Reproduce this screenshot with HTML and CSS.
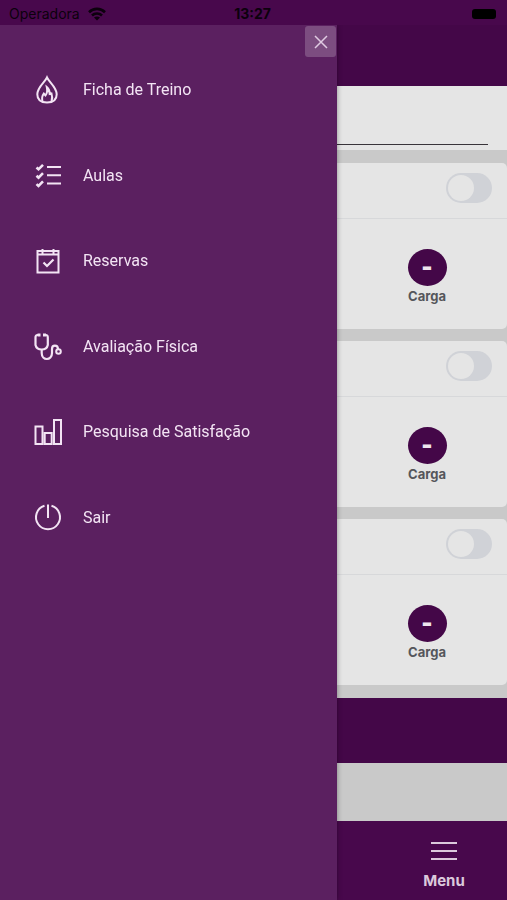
FILE: index.html
```html
<!DOCTYPE html>
<html lang="pt-BR">
<head>
<meta charset="utf-8">
<meta name="viewport" content="width=device-width, initial-scale=1">
<title>Menu</title>
<link rel="stylesheet" href="styles.css">
</head>
<body>
<div class="app">
  <div class="status">
    <span class="carrier">Operadora
      <svg class="wifi" viewBox="0 0 18 14" width="18" height="14" aria-hidden="true"><g fill="none" stroke="currentColor" stroke-width="2.6"><path d="M1 5.2C5.5.8 12.5.8 17 5.2"/><path d="M4 8.5C6.8 5.8 11.2 5.8 14 8.5"/></g><path d="M9 13.5L6 10.6C7.8 9.2 10.2 9.2 12 10.6z" fill="currentColor"/></svg>
    </span>
    <span class="clock">13:27</span>
    <span class="battery"></span>
  </div>
  <header class="header"></header>
  <div class="search"><div class="line"></div></div>
  <main class="cards">
    <section class="card">
      <div class="card-head"><input class="switch" type="checkbox" aria-label="Concluir"></div>
      <div class="card-body"><div class="load"><button class="load-button" type="button">-</button><span class="load-name">Carga</span></div></div>
    </section>
    <section class="card">
      <div class="card-head"><input class="switch" type="checkbox" aria-label="Concluir"></div>
      <div class="card-body"><div class="load"><button class="load-button" type="button">-</button><span class="load-name">Carga</span></div></div>
    </section>
    <section class="card">
      <div class="card-head"><input class="switch" type="checkbox" aria-label="Concluir"></div>
      <div class="card-body"><div class="load"><button class="load-button" type="button">-</button><span class="load-name">Carga</span></div></div>
    </section>
  </main>
  <div class="band"></div>
  <div class="spacer"></div>
  <footer class="tabs">
    <button class="tab" type="button">
      <svg viewBox="0 0 26 20" width="26" height="20" aria-hidden="true"><path d="M0 2h26M0 10h26M0 18h26" stroke="currentColor" stroke-width="2"/></svg>
      Menu
    </button>
  </footer>
</div>

<aside class="drawer">
  <button class="close" type="button" aria-label="Fechar"><svg viewBox="0 0 14 14" width="14" height="14" aria-hidden="true"><path d="M1 1l12 12M13 1L1 13" stroke="currentColor" stroke-width="1.5"/></svg></button>
  <nav class="menu">
    <a class="item" href="#">
      <svg class="icon" viewBox="0 0 30 30" aria-hidden="true"><path d="M14 2.5C12 7 4.3 12 4.3 19.3C4.3 25 8.500 27.500 14 27.500S23.700 25 23.700 19.300C23.700 12 16 7 14 2.500z"/><path d="M9.500 26.500C8.500 23 9 21 10.800 18.500L12.500 20.500C14.500 18 14.500 15.500 13.800 12C16.300 14 16.700 16 16.700 19L18.500 18.500C19.500 21.500 19.500 23.500 18.500 26.500"/></svg>
      <span>Ficha de Treino</span>
    </a>
    <a class="item" href="#">
      <svg class="icon" viewBox="0 0 30 30" aria-hidden="true"><path d="M14 7h14M14 15.300h14M14 23.600h14"/><path stroke-width="2.600" d="M3.500 7.500l2 1.800L10 4.800M3.500 15.800l2 1.800L10 13.100M3.500 24.100l2 1.800L10 21.400"/></svg>
      <span>Aulas</span>
    </a>
    <a class="item" href="#">
      <svg class="icon" viewBox="0 0 30 30" aria-hidden="true"><path d="M4.500 5h21v21.500h-21zM4.500 8.500h21M9.500 3v5M20.500 3v5"/><path stroke-width="2.200" d="M10.500 16.500l3.500 3.500 6.500-6.500"/></svg>
      <span>Reservas</span>
    </a>
    <a class="item" href="#">
      <svg class="icon" viewBox="0 0 30 30" aria-hidden="true"><path stroke-width="2.200" d="M6.500 4H4.500Q2.500 4 2.500 6.500V14Q3.500 18.500 8.700 18.500T14.800 14V6.500Q14.800 4 12.800 4H11"/><path stroke-width="2.200" d="M8.700 19V22C8.700 30 19 30 19 22V18C19 13.500 24.800 13.500 25 18"/><circle cx="25.500" cy="20.500" r="2.300"/><path stroke-width="3" d="M6 2.500v3M11.500 2.500v3"/></svg>
      <span>Avaliação Física</span>
    </a>
    <a class="item" href="#">
      <svg class="icon" viewBox="0 0 30 30" aria-hidden="true"><path d="M2.500 9.500h7v17.500h-7zM11.700 16h7v11h-7zM21 3h7v24h-7z"/></svg>
      <span>Pesquisa de Satisfação</span>
    </a>
    <a class="item" href="#">
      <svg class="icon" viewBox="0 0 30 30" aria-hidden="true"><path d="M11.500 3.800A12 12 0 1 0 18.500 3.800M15 2.500v13.500"/></svg>
      <span>Sair</span>
    </a>
  </nav>
</aside>
</body>
</html>
```
FILE: styles.css
```css
* { box-sizing: border-box; }

body {
  margin: 0;
  font-family: Inter, Roboto, sans-serif;
  background: #c9c9c9;
}

button { border: 0; padding: 0; font-family: inherit; }

.app {
  display: flex;
  flex-direction: column;
  min-height: 100vh;
}

.status {
  display: grid;
  grid-template-columns: 1fr auto 1fr;
  align-items: center;
  height: 25px;
  padding: 2px 11px 0 9px;
  background: #48084c;
  color: #0c010d;
  font-size: 14px;
}
.carrier {
  display: flex;
  align-items: center;
  gap: 8px;
}
.clock { font-weight: 700; }
.battery {
  justify-self: end;
  width: 24px;
  height: 10px;
  border-radius: 3px;
  background: #000;
}

.header { height: 61px; background: #440748; }

.search {
  height: 64px;
  padding: 58px 19px 0 0;
  background: #e5e5e5;
}
.line { height: 1px; background: #38343a; }

.cards {
  display: grid;
  gap: 12px;
  padding: 13px 0;
}
.card { border-radius: 5px; background: #e5e5e5; }
.card-head {
  display: flex;
  justify-content: flex-end;
  align-items: center;
  height: 56px;
  padding: 0 15px 6px 0;
  border-bottom: 1px solid #d7d8da;
}
.switch {
  appearance: none;
  width: 46px;
  height: 30px;
  margin: 0;
  padding: 2px;
  border-radius: 15px;
  background: #d0d2d7;
}
.switch::before {
  content: "";
  display: block;
  width: 26px;
  height: 26px;
  border-radius: 50%;
  background: #e5e5e5;
}
.card-body {
  display: flex;
  justify-content: flex-end;
  height: 110px;
  padding-top: 30px;
}
.load {
  display: flex;
  flex-direction: column;
  align-items: center;
  gap: 2px;
  width: 160px;
}
.load-button {
  width: 39px;
  height: 37px;
  border-radius: 50%;
  background: #440748;
  color: #eee5ee;
  font-family: Roboto, sans-serif;
  font-size: 28px;
  font-weight: 900;
  line-height: 36px;
}
.load-name {
  color: #55565b;
  font-size: 13px;
  font-weight: 700;
  line-height: 16px;
}

.band { height: 65px; background: #440748; }
.spacer { flex: 1; min-height: 57px; }

.tabs {
  display: flex;
  justify-content: flex-end;
  height: 79px;
  background: #48084c;
}
.tab {
  display: flex;
  flex-direction: column;
  align-items: center;
  gap: 10px;
  width: 126px;
  padding-top: 20px;
  background: none;
  color: #dbc9dc;
  font-size: 15px;
  font-weight: 700;
  line-height: 20px;
}

.drawer {
  position: fixed;
  top: 25px;
  bottom: 0;
  left: 0;
  width: 66.5%;
  padding-top: 22px;
  background: #5b2060;
  box-shadow: 0 0 5px rgba(0, 0, 0, 0.4);
  clip-path: inset(0 -8px 0 0);
}
.close {
  position: absolute;
  top: 1px;
  right: 1px;
  display: flex;
  align-items: center;
  justify-content: center;
  width: 31px;
  height: 31px;
  border-radius: 3px;
  background: #7c4d80;
  color: #e0cbe2;
}
.menu {
  display: grid;
  grid-template-rows: repeat(6, 1fr);
  height: 513px;
}
.item {
  display: flex;
  align-items: center;
  gap: 20px;
  padding-left: 33px;
  color: #f3e4f4;
  font-family: Roboto, sans-serif;
  font-size: 16px;
  text-decoration: none;
}
.icon {
  width: 30px;
  height: 30px;
  fill: none;
  stroke: currentColor;
  stroke-width: 2;
}
```
